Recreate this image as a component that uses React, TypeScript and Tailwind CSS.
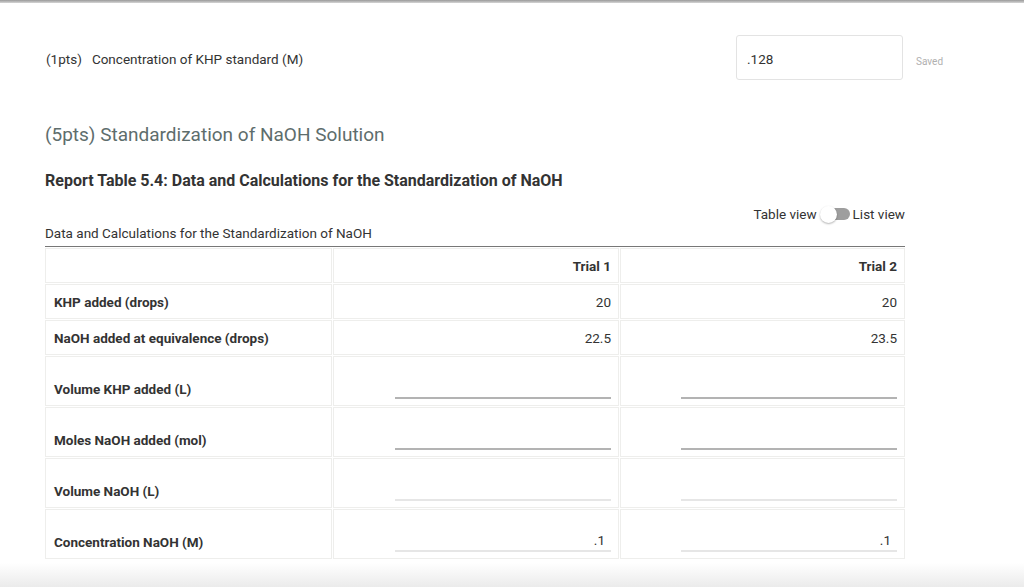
import React from "react";

const rows = [
  { label: "KHP added (drops)", kind: "value", t1: "20", t2: "20" },
  { label: "NaOH added at equivalence (drops)", kind: "value", t1: "22.5", t2: "23.5" },
  { label: "Volume KHP added (L)", kind: "input", t1: "", t2: "" },
  { label: "Moles NaOH added (mol)", kind: "input", t1: "", t2: "" },
  { label: "Volume NaOH (L)", kind: "calc", t1: "", t2: "" },
  { label: "Concentration NaOH (M)", kind: "calc", t1: ".1", t2: ".1" },
];

function InputCell({ value, kind }: { value: string; kind: string }) {
  return (
    <td className="border border-[#eeeeec] align-bottom pr-[7px] pb-[6px]">
      <div className="flex justify-end">
        <div
          className={
            kind === "input"
              ? "w-[216px] h-[22px] border-b-[2px] border-[#b3b3b3] text-right text-[13.5px] text-[#333]"
              : "w-[216px] h-[22px] border-b-[2px] border-[#e6e6e6] text-right text-[13.5px] text-[#333] pr-[6px]"
          }
        >
          {value}
        </div>
      </div>
    </td>
  );
}

export default function App() {
  return (
    <div
      className="relative w-[1024px] h-[587px] bg-white overflow-hidden text-[#333]"
      style={{ fontFamily: "Roboto, 'Noto Sans', sans-serif" }}
    >
      <div className="h-[3px] bg-gradient-to-b from-[#9a9a9a] to-[#d6d6d6]" />

      <div className="pl-[45px]">
        {/* Question 1 */}
        <div className="flex items-center mt-[32px]">
          <div className="w-[691px] flex items-center text-[13.5px] text-[#333] mt-[3px]">
            <span className="pl-[1px]">(1pts)</span>
            <span className="ml-[10px]">Concentration of KHP standard (M)</span>
          </div>
          <div className="w-[167px] h-[45px] border border-[#e3e3e3] rounded-[3px] flex items-center pl-[10px] pt-[4px] text-[13.5px] text-[#333]">
            .128
          </div>
          <div className="ml-[13px] mt-[7px] text-[10px] text-[#b0b0b0]">Saved</div>
        </div>

        {/* Section heading */}
        <div className="mt-[42px] text-[19px] leading-[25px] text-[#5e6d6c]">
          (5pts) Standardization of NaOH Solution
        </div>

        <div className="mt-[23px] text-[16px] leading-[21px] font-bold text-[#333]">
          Report Table 5.4: Data and Calculations for the Standardization of NaOH
        </div>

        <div className="w-[860px]">
          <div className="mt-[13px] flex items-center justify-end text-[13.5px] text-[#333]">
            <span>Table view</span>
            <span className="relative ml-[3px] mr-[3px] w-[30px] h-[16px] flex items-center">
              <span className="absolute left-[8px] right-0 h-[12px] rounded-full bg-[#9e9e9e]" />
              <span className="absolute left-0 w-[17px] h-[17px] rounded-full bg-white shadow-[0_1px_2px_rgba(0,0,0,0.3)]" />
            </span>
            <span>List view</span>
          </div>

          <div className="mt-0 pb-[4px] text-[13.5px] leading-[18px] border-b border-[#777]">
            Data and Calculations for the Standardization of NaOH
          </div>

          <table className="w-[858px] table-fixed border-separate border-spacing-[1px] -ml-[1px]">
            <colgroup>
              <col className="w-[287px]" />
              <col className="w-[286px]" />
              <col className="w-[285px]" />
            </colgroup>
            <tbody>
              <tr className="h-[35px]">
                <td className="border border-[#eeeeec]" />
                <td className="border border-[#eeeeec] text-right pr-[7px] text-[13.5px] font-bold">Trial 1</td>
                <td className="border border-[#eeeeec] text-right pr-[7px] text-[13.5px] font-bold">Trial 2</td>
              </tr>
              {rows.map((r) =>
                r.kind === "value" ? (
                  <tr key={r.label} className="h-[35px]">
                    <td className="border border-[#eeeeec] pl-[8px] text-[13.5px] font-bold">{r.label}</td>
                    <td className="border border-[#eeeeec] text-right pr-[7px] text-[13.5px]">{r.t1}</td>
                    <td className="border border-[#eeeeec] text-right pr-[7px] text-[13.5px]">{r.t2}</td>
                  </tr>
                ) : (
                  <tr key={r.label} className="h-[50px]">
                    <td className="border border-[#eeeeec] pl-[8px] pb-[6px] align-bottom text-[13.5px] font-bold">
                      {r.label}
                    </td>
                    <InputCell value={r.t1} kind={r.kind} />
                    <InputCell value={r.t2} kind={r.kind} />
                  </tr>
                )
              )}
            </tbody>
          </table>
        </div>
      </div>

      <div className="absolute left-0 right-0 bottom-0 h-[24px] bg-gradient-to-b from-white to-[#ebebeb]" />
    </div>
  );
}
